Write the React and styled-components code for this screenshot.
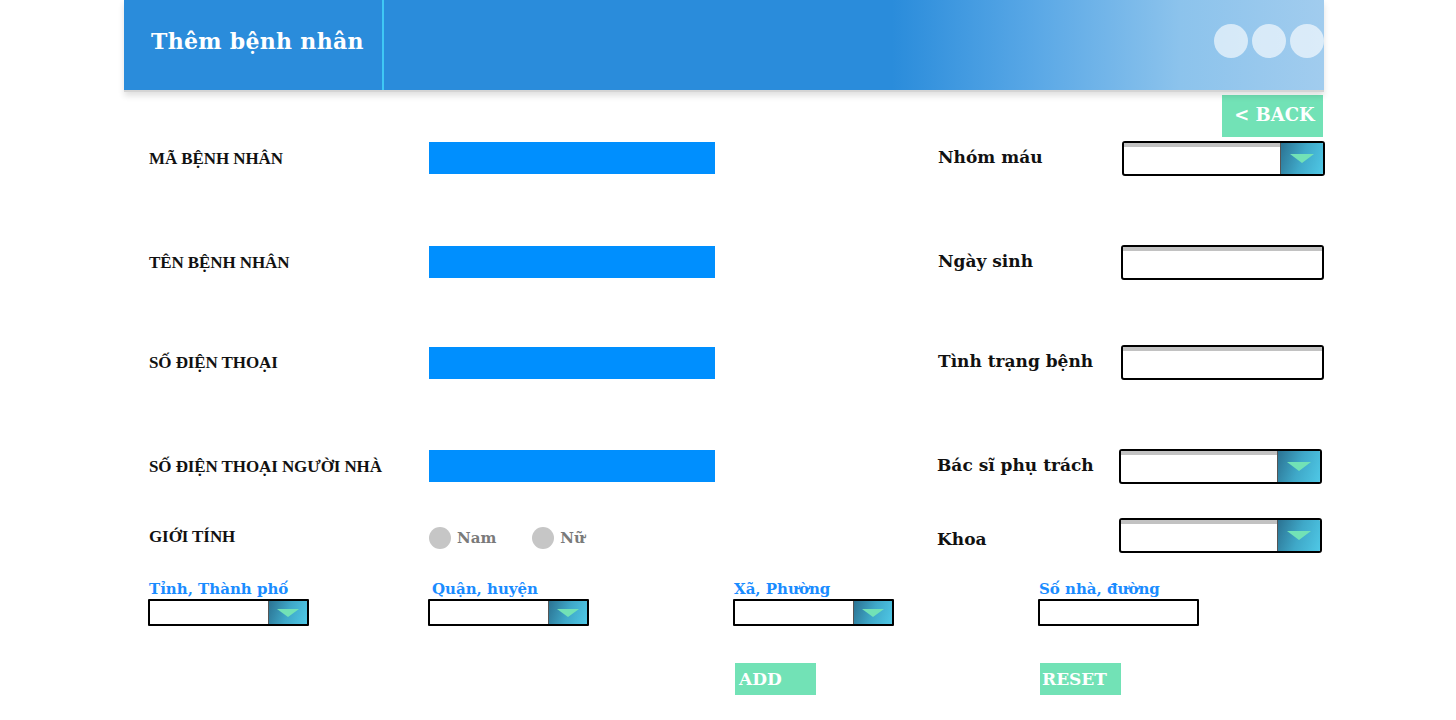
import React from 'react';
import styled, { createGlobalStyle } from 'styled-components';

const Global = createGlobalStyle`
    body {
        margin: 0;
        background: #fff;
        font-family: 'DejaVu Serif', 'Liberation Serif', serif;
    }
`;

const Page = styled.div`
    width: 1200px;
    margin-left: 124px;
`;

const Header = styled.header`
    position: relative;
    height: 90px;
    display: flex;
    align-items: stretch;
    background: linear-gradient(90deg, #2a8cdb 0%, #2a8cdb 64%, #5aa8e6 76%, #8cc3ec 88%, #a1ccee 100%);
    border-bottom: 2px solid #d4d4d4;
    box-shadow: 0 4px 6px rgba(0, 0, 0, 0.12);
`;

const TitleBox = styled.div`
    box-sizing: border-box;
    width: 260px;
    display: flex;
    align-items: center;
    padding: 0 0 8px 27px;
    border-right: 2px solid #3fc8f4;
`;

const Title = styled.h1`
    margin: 0;
    color: #fff;
    font-family: 'DejaVu Serif', serif;
    font-size: 22px;
    font-weight: bold;
    letter-spacing: 0.3px;
    white-space: nowrap;
`;

const Dots = styled.div`
    margin-left: auto;
    display: flex;
    gap: 4px;
    align-items: center;
    padding-bottom: 8px;
`;

const Dot = styled.span`
    width: 34px;
    height: 34px;
    border-radius: 50%;
    background: rgba(255, 255, 255, 0.62);
`;

const BackRow = styled.div`
    display: flex;
    justify-content: flex-end;
    padding: 3px 1px 0 0;
`;

const ActionButton = styled.button`
    border: 0;
    background: #72e2b6;
    color: #fff;
    font-family: 'DejaVu Serif', serif;
    font-weight: bold;
    font-size: ${(p) => p.size || 17}px;
    width: ${(p) => p.width || 81}px;
    height: ${(p) => p.height || 32}px;
    text-align: ${(p) => p.align || 'left'};
    padding: 0 0 ${(p) => p.lift || 0}px ${(p) => p.pad || 4}px;
    cursor: pointer;
`;

const Row = styled.div`
    display: grid;
    grid-template-columns: 280px 286px 223px 184px 202px;
    align-items: center;
    height: 36px;
    margin-top: ${(p) => p.gap}px;
    padding-left: 25px;
`;

const LeftLabel = styled.div`
    font-family: 'Liberation Serif', serif;
    font-size: 17px;
    font-weight: bold;
    color: #111;
    letter-spacing: -0.1px;
    padding-top: ${(p) => p.dy || 0}px;
`;

const BlueInput = styled.div`
    height: 32px;
    background: #008ffe;
    margin-top: ${(p) => p.dy || 0}px;
`;

const RightLabel = styled.div`
    grid-column: 4;
    font-family: 'DejaVu Serif', serif;
    font-size: 17px;
    font-weight: bold;
    color: #111;
    margin-left: ${(p) => p.dx || 0}px;
    padding-bottom: 2px;
    margin-top: ${(p) => p.dy || 0}px;
`;

const Box = styled.div`
    grid-column: ${(p) => p.col || 'auto'};
    position: relative;
    display: flex;
    box-sizing: border-box;
    width: ${(p) => p.width}px;
    height: ${(p) => p.height}px;
    border: 2px solid #000;
    border-radius: ${(p) => (p.band ? 3 : 1)}px;
    background: #fff;
    margin-left: ${(p) => p.dx || 0}px;
    overflow: hidden;
    &:before {
        content: '';
        display: ${(p) => (p.band ? 'block' : 'none')};
        position: absolute;
        left: 0;
        right: 0;
        top: 0;
        height: 4px;
        background: #c2c2c2;
    }
`;

const Arrow = styled.div`
    margin-left: auto;
    width: ${(p) => p.w}px;
    height: 100%;
    display: flex;
    align-items: center;
    justify-content: center;
    background: linear-gradient(110deg, #2b7292 0%, #3fa8c8 50%, #4fc8e6 100%);
    border-left: 1px solid #555;
    position: relative;
    z-index: 1;
    &:after {
        content: '';
        width: 0;
        height: 0;
        border-left: ${(p) => p.tri}px solid transparent;
        border-right: ${(p) => p.tri}px solid transparent;
        border-top: ${(p) => Math.round(p.tri * 0.75)}px solid #72e2b6;
    }
`;

const Select = ({ width, height, band, col, dx, arrow = 42, tri = 12 }) => (
    <Box width={width} height={height} band={band} col={col} dx={dx}>
        <Arrow w={arrow} tri={tri} />
    </Box>
);

const Gender = styled.div`
    grid-column: 2 / 4;
    display: flex;
    gap: 36px;
    align-items: center;
    padding-top: 5px;
`;

const Radio = styled.label`
    display: flex;
    align-items: center;
    gap: 6px;
    font-family: 'DejaVu Serif', serif;
    font-weight: bold;
    font-size: 15px;
    color: #7a7a7a;
    &:before {
        content: '';
        width: 22px;
        height: 22px;
        border-radius: 50%;
        background: #c6c6c6;
    }
`;

const AddressRow = styled.div`
    display: flex;
    margin-top: 27px;
    padding-left: 24px;
`;

const Field = styled.div`
    width: ${(p) => p.width}px;
    display: flex;
    flex-direction: column;
`;

const BlueLabel = styled.div`
    font-family: 'DejaVu Serif', serif;
    font-weight: bold;
    font-size: 15px;
    color: #1a8cff;
    height: 19px;
    white-space: nowrap;
    padding-left: ${(p) => p.dx || 1}px;
`;

const ButtonRow = styled.div`
    display: flex;
    margin-top: 37px;
    padding-left: 611px;
    gap: 224px;
`;

export default function App() {
    return (
        <Page>
            <Global />
            <Header>
                <TitleBox>
                    <Title>Thêm bệnh nhân</Title>
                </TitleBox>
                <Dots>
                    <Dot />
                    <Dot />
                    <Dot />
                </Dots>
            </Header>
            <BackRow>
                <ActionButton width={101} height={42} size={18} align="center" pad={0} lift={4}>
                    &lt; BACK
                </ActionButton>
            </BackRow>

            <Row gap={3}>
                <LeftLabel dy={1}>MÃ BỆNH NHÂN</LeftLabel>
                <BlueInput />
                <RightLabel>Nhóm máu</RightLabel>
                <Select width={203} height={35} band />
            </Row>
            <Row gap={68}>
                <LeftLabel dy={2}>TÊN BỆNH NHÂN</LeftLabel>
                <BlueInput />
                <RightLabel>Ngày sinh</RightLabel>
                <Box width={203} height={35} band dx={-1} />
            </Row>
            <Row gap={64}>
                <LeftLabel dy={1}>SỐ ĐIỆN THOẠI</LeftLabel>
                <BlueInput dy={2} />
                <RightLabel>Tình trạng bệnh</RightLabel>
                <Box width={203} height={35} band dx={-1} />
            </Row>
            <Row gap={68}>
                <LeftLabel dy={2}>SỐ ĐIỆN THOẠI NGƯỜI NHÀ</LeftLabel>
                <BlueInput />
                <RightLabel dx={-1}>Bác sĩ phụ trách</RightLabel>
                <Select width={203} height={35} band dx={-3} />
            </Row>
            <Row gap={33}>
                <LeftLabel dy={4}>GIỚI TÍNH</LeftLabel>
                <Gender>
                    <Radio>Nam</Radio>
                    <Radio>Nữ</Radio>
                </Gender>
                <RightLabel dx={-1} dy={10}>Khoa</RightLabel>
                <Select width={203} height={35} band dx={-3} />
            </Row>

            <AddressRow>
                <Field width={280}>
                    <BlueLabel>Tỉnh, Thành phố</BlueLabel>
                    <Select width={161} height={27} arrow={38} tri={11} />
                </Field>
                <Field width={305}>
                    <BlueLabel dx={4}>Quận, huyện</BlueLabel>
                    <Select width={161} height={27} arrow={38} tri={11} />
                </Field>
                <Field width={305}>
                    <BlueLabel>Xã, Phường</BlueLabel>
                    <Select width={161} height={27} arrow={38} tri={11} />
                </Field>
                <Field width={161}>
                    <BlueLabel>Số nhà, đường</BlueLabel>
                    <Box width={161} height={27} />
                </Field>
            </AddressRow>

            <ButtonRow>
                <ActionButton>ADD</ActionButton>
                <ActionButton pad={2}>RESET</ActionButton>
            </ButtonRow>
        </Page>
    );
}
